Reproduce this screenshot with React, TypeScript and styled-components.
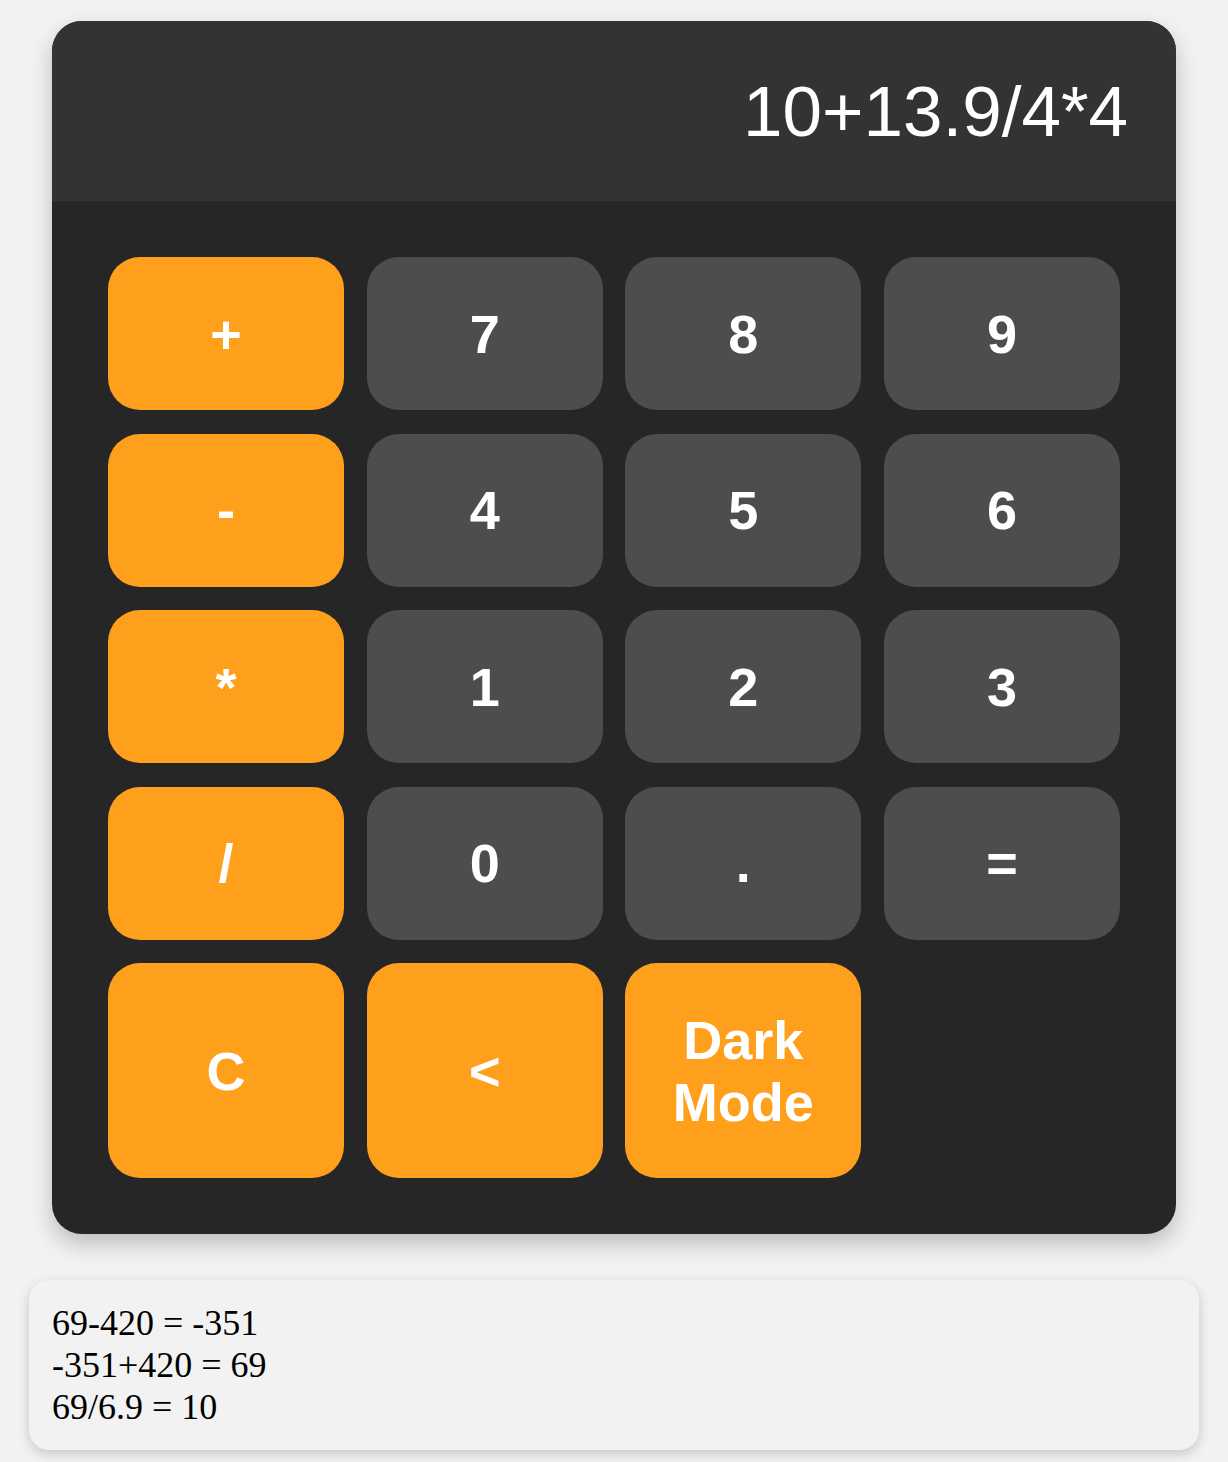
import React from "react";
import styled, { createGlobalStyle } from "styled-components";

const GlobalStyle = createGlobalStyle`
  html, body {
    margin: 0;
    padding: 0;
    background: #f2f2f2;
  }
  body {
    font-family: "Liberation Serif", "Times New Roman", serif;
  }
`;

const Page = styled.div`
  padding: 21px 29px 13px;
  display: flex;
  flex-direction: column;
  gap: 46px;
`;

const Calculator = styled.div`
  margin: 0 23px;
  border-radius: 30px;
  overflow: hidden;
  background: #262626;
  box-shadow: 0 10px 22px rgba(0, 0, 0, 0.22);
`;

const Display = styled.div`
  height: 180px;
  background: #333333;
  display: flex;
  align-items: center;
  justify-content: flex-end;
  padding: 0 48px;
  box-sizing: border-box;
  color: #ffffff;
  font-family: "Liberation Sans", Arial, sans-serif;
  font-size: 71px;
  line-height: normal;
`;

const Keypad = styled.div`
  display: grid;
  grid-template-columns: repeat(4, 1fr);
  column-gap: 22.5px;
  row-gap: 23.5px;
  padding: 56px;
`;

const Key = styled.button<{ $accent?: boolean }>`
  border: none;
  margin: 0;
  border-radius: 32px;
  padding: 45.5px 8px;
  background: ${(p) => (p.$accent ? "#ffa01c" : "#4d4d4d")};
  color: #ffffff;
  font-family: "Liberation Sans", Arial, sans-serif;
  font-weight: 700;
  font-size: 54px;
  line-height: normal;
  display: flex;
  align-items: center;
  justify-content: center;
  text-align: center;
  cursor: pointer;
`;

const History = styled.div`
  background: #f2f2f2;
  border-radius: 20px;
  padding: 22px 23px;
  box-shadow: 0 4px 12px rgba(0, 0, 0, 0.18);
  color: #000000;
  font-family: "Liberation Serif", "Times New Roman", serif;
  font-size: 36px;
  line-height: 42px;
`;

const HistoryLine = styled.div``;

const keys: { label: string; accent?: boolean }[] = [
  { label: "+", accent: true },
  { label: "7" },
  { label: "8" },
  { label: "9" },
  { label: "-", accent: true },
  { label: "4" },
  { label: "5" },
  { label: "6" },
  { label: "*", accent: true },
  { label: "1" },
  { label: "2" },
  { label: "3" },
  { label: "/", accent: true },
  { label: "0" },
  { label: "." },
  { label: "=" },
  { label: "C", accent: true },
  { label: "<", accent: true },
  { label: "Dark Mode", accent: true },
];

const history = ["69-420 = -351", "-351+420 = 69", "69/6.9 = 10"];

export default function App() {
  return (
    <>
      <GlobalStyle />
      <Page>
        <Calculator>
          <Display>10+13.9/4*4</Display>
          <Keypad>
            {keys.map((k) => (
              <Key key={k.label} $accent={k.accent}>
                {k.label}
              </Key>
            ))}
          </Keypad>
        </Calculator>
        <History>
          {history.map((h) => (
            <HistoryLine key={h}>{h}</HistoryLine>
          ))}
        </History>
      </Page>
    </>
  );
}
